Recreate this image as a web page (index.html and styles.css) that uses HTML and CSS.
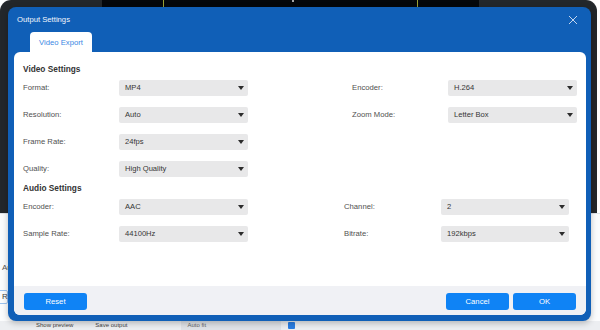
FILE: index.html
```html
<!DOCTYPE html>
<html>
<head>
<meta charset="utf-8">
<link rel="stylesheet" href="styles.css">
</head>
<body>
<div class="app">
  <div class="app-top">
    <div class="sidebar"></div>
    <div class="video"><span class="mark m1"></span><span class="mark m2"></span><span class="dot"></span></div>
    <div class="rest"></div>
  </div>
  <div class="app-bottom">
    <div class="side-line"></div>
    <div class="side-text">Au</div>
    <div class="side-input">R</div>
    <div class="status">
      <span class="st-a">Show preview</span>
      <span class="st-b">Save output</span>
      <span class="st-box">Auto fit</span>
      <span class="st-icon"></span>
    </div>
  </div>
</div>

<div class="dialog">
  <div class="dlg-head">
    <div class="dlg-title">Output Settings</div>
    <span class="dlg-close">
      <svg width="10" height="10" viewBox="0 0 10 10"><path d="M1 1L9 9M9 1L1 9" stroke="#c4d6ee" stroke-width="1" fill="none"/></svg>
    </span>
  </div>
  <div class="tabs"><div class="tab">Video Export</div></div>
  <div class="panel">
    <div class="panel-body">
      <div class="sec-title">Video Settings</div>
      <div class="grid grid-video">
        <div class="lab lab-l">Format:</div><div class="select sel-l">MP4</div>
        <div class="lab lab-r">Encoder:</div><div class="select sel-r">H.264</div>
        <div class="lab lab-l">Resolution:</div><div class="select sel-l">Auto</div>
        <div class="lab lab-r">Zoom Mode:</div><div class="select sel-r">Letter Box</div>
        <div class="lab lab-l">Frame Rate:</div><div class="select sel-l">24fps</div>
        <div class="lab lab-l">Quality:</div><div class="select sel-l">High Quality</div>
      </div>
      <div class="sec-title sec-audio">Audio Settings</div>
      <div class="grid grid-audio">
        <div class="lab lab-l">Encoder:</div><div class="select sel-l">AAC</div>
        <div class="lab lab-r">Channel:</div><div class="select sel-r">2</div>
        <div class="lab lab-l">Sample Rate:</div><div class="select sel-l">44100Hz</div>
        <div class="lab lab-r">Bitrate:</div><div class="select sel-r">192kbps</div>
      </div>
    </div>
    <div class="panel-foot">
      <button class="btn">Reset</button>
      <div class="foot-right">
        <button class="btn">Cancel</button>
        <button class="btn">OK</button>
      </div>
    </div>
  </div>
</div>
</body>
</html>
```
FILE: styles.css
```css
* { box-sizing: border-box; }
html, body { margin: 0; padding: 0; }
body {
  width: 600px;
  height: 330px;
  overflow: hidden;
  position: relative;
  background: #ffffff;
  font-family: "Liberation Sans", Arial, sans-serif;
}

/* background application */
.app { height: 330px; display: flex; flex-direction: column; }
.app-top {
  height: 213px;
  display: flex;
  background: #23272b;
  border-radius: 11px 11px 0 0;
  margin-right: 3px;
}
.sidebar { width: 102px; }
.video { width: 377px; background: #04070b; position: relative; }
.rest { flex: 1; }
.mark { position: absolute; top: 0; width: 1px; height: 7px; background: #9aa033; }
.mark.m1 { left: 61px; }
.mark.m2 { left: 315px; }
.dot { position: absolute; top: 0; left: 190px; width: 2px; height: 2px; background: #ddd; border-radius: 1px; }
.app-bottom {
  flex: 1;
  position: relative;
  background: #fbfcfd;
}
.side-line { height: 1px; background: #dfe3e8; }
.side-text {
  position: absolute; left: 2px; top: 50px;
  font-size: 8px; color: #555;
}
.side-input {
  position: absolute; left: -3px; top: 77px;
  width: 11px; height: 14px;
  border: 1px solid #9cc2ee;
  border-radius: 2px;
  font-size: 8px; color: #444; line-height: 12px; padding-left: 4px;
}
.status {
  position: absolute; left: 0; right: 0; top: 108px; height: 9px;
  background: #eceef1;
  display: flex; align-items: center;
  font-size: 6px; line-height: 9px; color: #444;
}
.st-a { margin-left: 36px; }
.st-b { margin-left: 22px; }
.st-box { margin-left: 54px; width: 100px; height: 9px; padding-left: 6px; background: #dfe2e7; color: #666; }
.st-icon { margin-left: 7px; width: 7px; height: 7px; background: #2a7de1; border-radius: 1px; }

/* dialog (modal overlay) */
.dialog {
  position: absolute;
  left: 8px;
  top: 7px;
  width: 583px;
  height: 314px;
  background: #105fb7;
  border-radius: 8px;
  box-shadow: 0 2px 6px rgba(0, 0, 0, 0.25);
  display: flex;
  flex-direction: column;
}
.dlg-head {
  height: 25px;
  display: flex;
  align-items: center;
  justify-content: space-between;
  padding: 0 10px 0 9px;
}
.dlg-title { font-size: 7.7px; color: #f2f6fc; }
.dlg-close { display: flex; width: 10px; height: 10px; margin-right: 3px; margin-top: 1px; }
.tabs { height: 20px; display: flex; padding-left: 22px; }
.tab {
  width: 62px;
  background: #ffffff;
  border-radius: 4px 4px 0 0;
  font-size: 7.7px;
  color: #3a88e4;
  display: flex; align-items: center; justify-content: center;
  padding-top: 1px;
}
.panel {
  flex: 1;
  margin: 0 5px 6px 6px;
  background: #ffffff;
  border-radius: 6px;
  display: flex;
  flex-direction: column;
  overflow: hidden;
}
.panel-body { flex: 1; padding: 11px 0 0 9px; }
.sec-title {
  height: 12px;
  line-height: 12px;
  font-size: 8.3px;
  font-weight: bold;
  color: #333;
  margin-bottom: 5px;
}
.sec-audio { margin-top: 5px; }
.grid { display: grid; grid-auto-rows: 16px; row-gap: 11px; }
.grid-video { grid-template-columns: 96px 129px 104px 96px 129px; }
.grid-audio { grid-template-columns: 96px 129px 96px 97px 128px; }
.lab-l { grid-column: 1; }
.sel-l { grid-column: 2; }
.lab-r { grid-column: 4; }
.sel-r { grid-column: 5; }
.lab {
  font-size: 7.7px;
  color: #505050;
  line-height: 16px;
}
.select {
  position: relative;
  background: #e8e8e9;
  border-radius: 2px;
  font-size: 7.6px;
  color: #363636;
  line-height: 16px;
  padding-left: 6px;
}
.select::after {
  content: "";
  position: absolute;
  right: 4px;
  top: 6px;
  border-left: 3px solid transparent;
  border-right: 3px solid transparent;
  border-top: 4px solid #2c2c2c;
}
.panel-foot {
  height: 29px;
  background: #f0f1f5;
  display: flex;
  align-items: center;
  justify-content: space-between;
  padding: 0 10px;
}
.foot-right { display: flex; gap: 4px; }
.btn {
  width: 63px;
  height: 17px;
  border: 0;
  border-radius: 3px;
  background: #0f83f5;
  color: #ffffff;
  font-family: "Liberation Sans", Arial, sans-serif;
  font-size: 7.7px;
  padding: 0;
  margin-top: 1px;
}
```
